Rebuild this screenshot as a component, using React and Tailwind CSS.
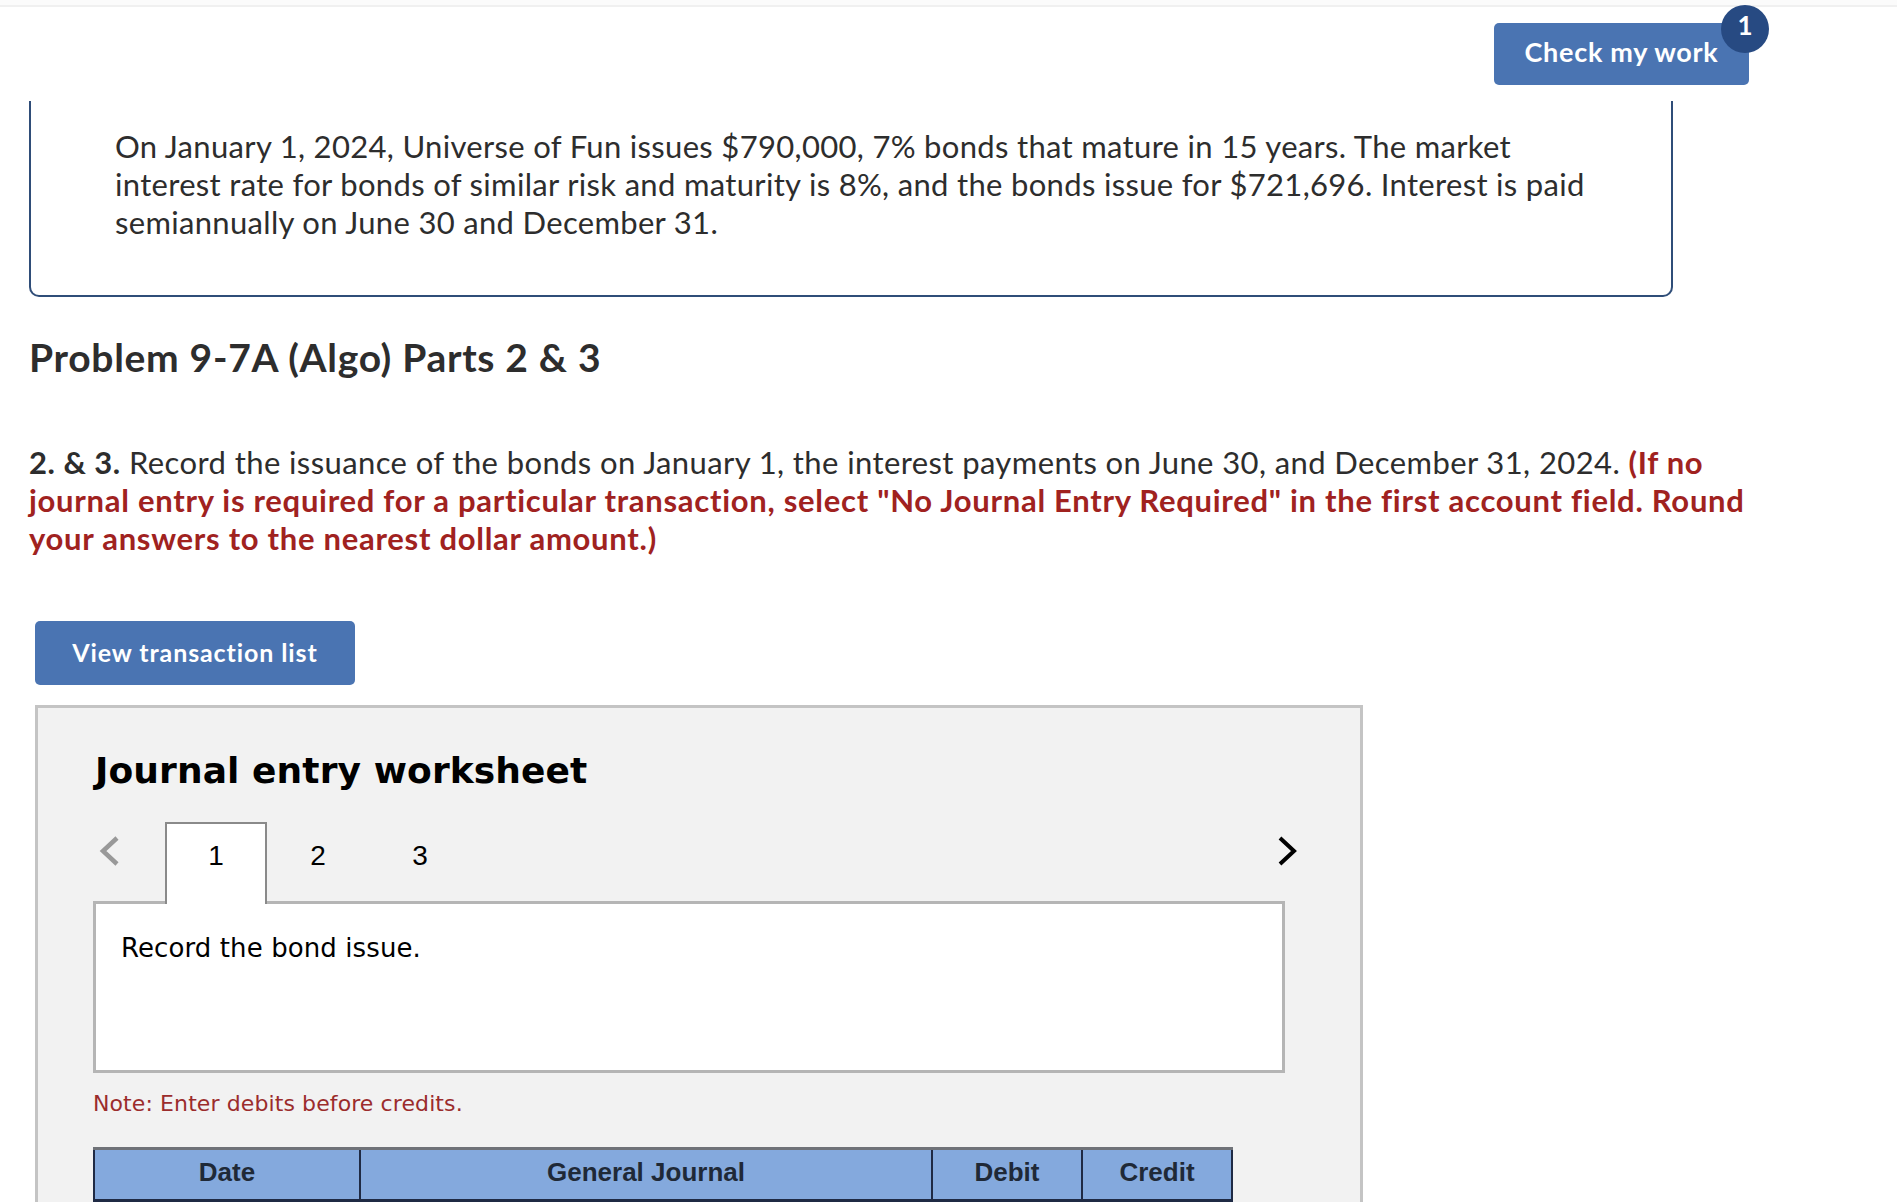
import React from "react";

const bodyFont = "font-['Lato','Open_Sans',sans-serif]";
const sheetFont = "font-['DejaVu_Sans',sans-serif]";
const tableFont = "font-['Liberation_Sans',Arial,sans-serif]";

function ChevronLeft() {
  return (
    <svg width="22" height="30" viewBox="0 0 22 30" className="block">
      <path d="M19 2 L5 15 L19 28" fill="none" stroke="#999999" strokeWidth="4.5" />
    </svg>
  );
}

function ChevronRight() {
  return (
    <svg width="22" height="30" viewBox="0 0 22 30" className="block">
      <path d="M3 2 L17 15 L3 28" fill="none" stroke="#000000" strokeWidth="4" />
    </svg>
  );
}

const headCell = "border-x-[2px] border-b-[3px] border-t-[3px] border-x-[#1f2a44] border-b-[#1f2a44] border-t-[#6f7278] pb-[5px] font-bold";

export default function App() {
  return (
    <div className={`h-[1202px] w-full overflow-hidden bg-white text-[#2d2d2d] ${bodyFont}`}>
      {/* top bar */}
      <div className="h-[7px] border-b-2 border-[#f0f0f0] bg-[#fbfbfb]"></div>
      <div className="flex h-[94px] justify-end pr-[148px] pt-[16px]">
        <div className="relative">
          <button className="flex h-[62px] w-[255px] items-center justify-center rounded-[5px] bg-[#4a74b2] pb-[4px] text-[27px] font-bold tracking-[0.7px] text-white">
            Check my work
          </button>
          <span className="absolute left-[227px] top-[-18px] flex h-[48px] w-[48px] items-center justify-center rounded-full bg-[#274a82] pb-[8px] text-[26px] font-bold text-white">
            1
          </span>
        </div>
      </div>

      {/* scenario box */}
      <div className="ml-[29px] h-[196px] w-[1644px] rounded-b-[10px] border-2 border-t-0 border-[#2f4d78] pl-[84px] pt-[26px]">
        <p className="w-[1530px] text-[31px] leading-[38px] tracking-[0.32px]">
          On January 1, 2024, Universe of Fun issues $790,000, 7% bonds that mature in 15 years. The market
          <br />
          interest rate for bonds of similar risk and maturity is 8%, and the bonds issue for $721,696. Interest is paid
          <br />
          semiannually on June 30 and December 31.
        </p>
      </div>

      <h2 className="ml-[29px] mt-[37px] whitespace-nowrap text-[39px] font-bold leading-[46px] tracking-[0.7px]">
        Problem 9-7A (Algo) Parts 2 & 3
      </h2>

      <p className="ml-[29px] mt-[63px] whitespace-nowrap text-[31px] leading-[38px] tracking-[0.4px]">
        <strong className="font-bold tracking-[0.5px]">2. & 3.</strong> Record the issuance of the bonds on January 1, the interest payments on June 30, and December 31, 2024.{" "}
        <strong className="font-bold tracking-[0.72px] text-[#a0221f]">
          (If no
          <br />
          journal entry is required for a particular transaction, select "No Journal Entry Required" in the first account field. Round
          <br />
          your answers to the nearest dollar amount.)
        </strong>
      </p>

      <button className="ml-[35px] mt-[64px] block h-[64px] w-[320px] rounded-[5px] bg-[#4a74b2] text-[25px] font-bold tracking-[0.9px] text-white">
        View transaction list
      </button>

      {/* worksheet panel */}
      <div className={`ml-[35px] mt-[20px] h-[600px] w-[1328px] border-[3px] border-[#c4c4c4] bg-[#f2f2f2] pl-[55px] pt-[41px] text-black ${sheetFont}`}>
        <h3 className="ml-[2px] text-[36px] font-bold leading-[44px] tracking-[0.1px]">Journal entry worksheet</h3>

        <div className="mt-[29px] flex w-[1192px] items-end">
          <div className="mb-[35px] ml-[5px] w-[67px]">
            <ChevronLeft />
          </div>
          <div className={`relative z-10 mb-[-3px] flex h-[82px] w-[102px] justify-center border-[2.5px] border-b-0 border-[#8a8a8a] bg-white pt-[13px] text-[28px] leading-[38px] ${tableFont}`}>
            1
          </div>
          <div className={`mb-[-3px] flex h-[82px] w-[102px] justify-center pt-[15px] text-[28px] leading-[38px] ${tableFont}`}>2</div>
          <div className={`mb-[-3px] flex h-[82px] w-[102px] justify-center pt-[15px] text-[28px] leading-[38px] ${tableFont}`}>3</div>
          <div className="mb-[35px] ml-auto mr-[-14px]">
            <ChevronRight />
          </div>
        </div>

        <div className="h-[172px] w-[1192px] border-[3px] border-[#b5b5b5] bg-white pl-[25px] pt-[27px] text-[26px] leading-[34px] tracking-[0.1px]">
          Record the bond issue.
        </div>

        <p className="mt-[17px] text-[22px] leading-[28px] tracking-[0.1px] text-[#9b2c2c]">Note: Enter debits before credits.</p>

        <table className={`mt-[29px] w-[1139px] table-fixed border-collapse text-[26px] text-[#1f2937] ${tableFont}`}>
          <thead>
            <tr className="h-[52px] bg-[#84a9dd]">
              <th className={`w-[266px] ${headCell}`}>Date</th>
              <th className={`w-[572px] ${headCell}`}>General Journal</th>
              <th className={`w-[150px] ${headCell}`}>Debit</th>
              <th className={`w-[150px] ${headCell}`}>Credit</th>
            </tr>
          </thead>
          <tbody>
            <tr className="h-[60px] bg-white">
              <td className="border-x-[2px] border-[#1f2a44]"></td>
              <td className="border-x-[2px] border-[#1f2a44] align-top">
                <div className="h-[3px] bg-[#5f86c0]"></div>
              </td>
              <td className="border-x-[2px] border-[#1f2a44] align-top">
                <div className="h-[3px] bg-[#5f86c0]"></div>
              </td>
              <td className="border-x-[2px] border-[#1f2a44] align-top">
                <div className="h-[3px] bg-[#5f86c0]"></div>
              </td>
            </tr>
          </tbody>
        </table>
      </div>
    </div>
  );
}
